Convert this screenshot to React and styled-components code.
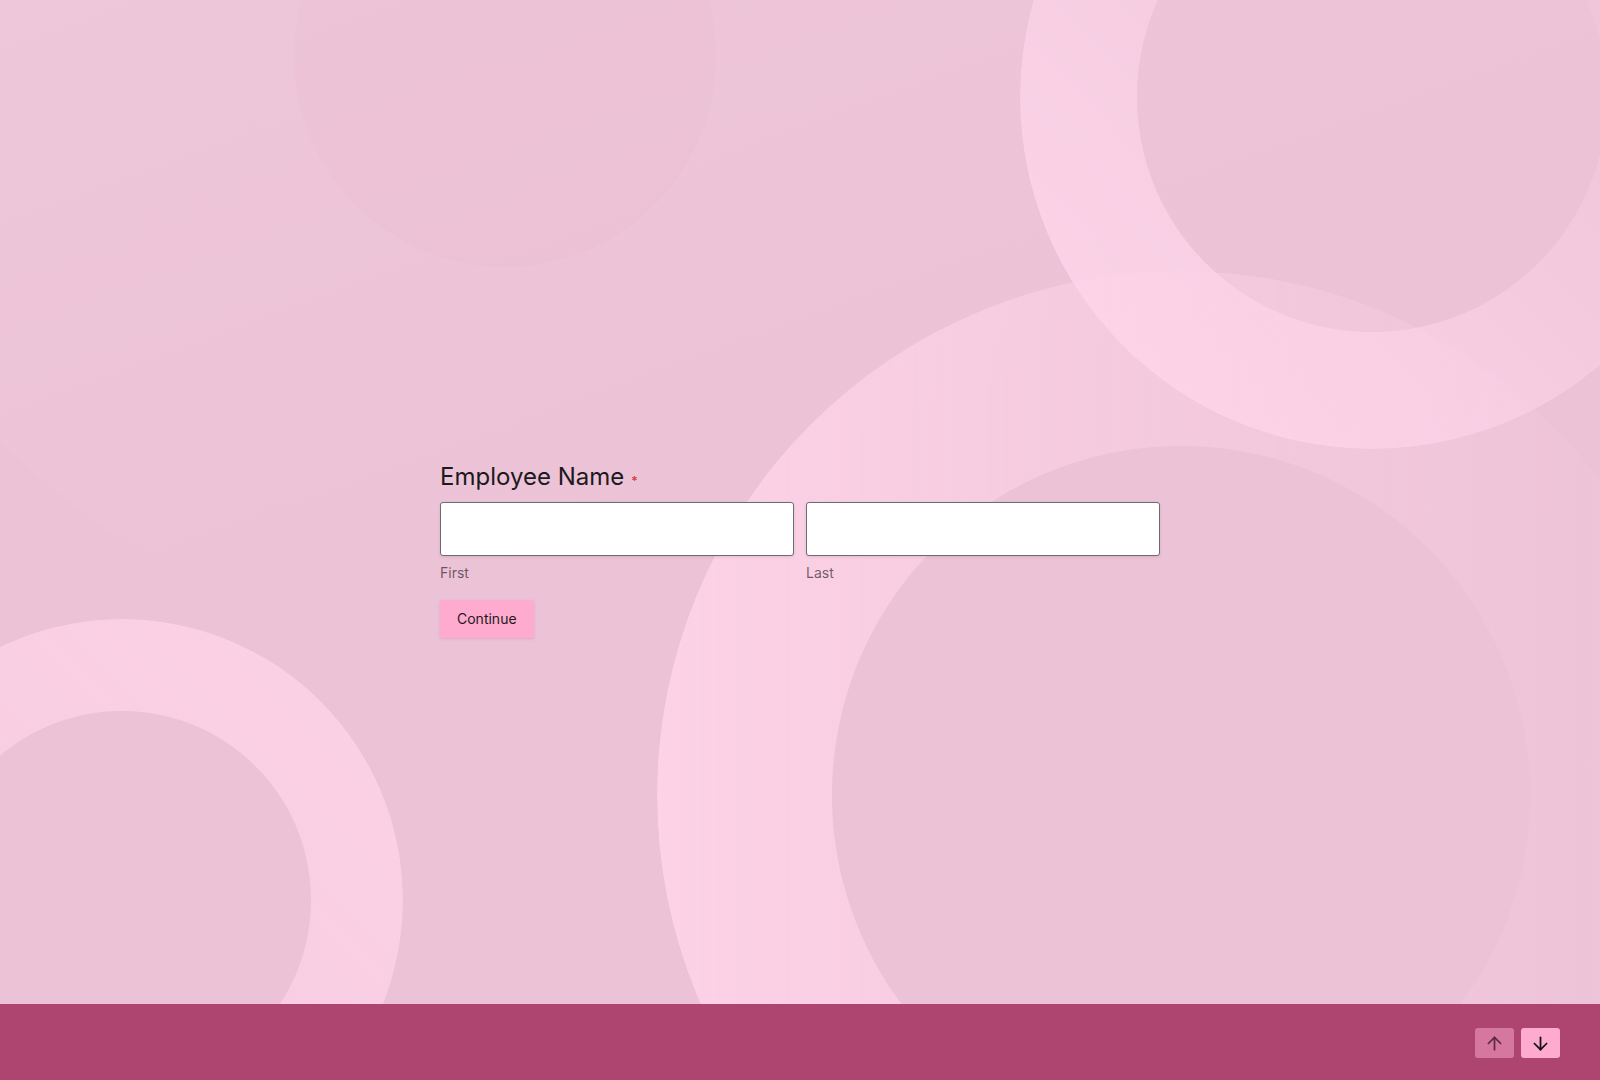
import styled, { createGlobalStyle } from "styled-components";
import { ArrowUp, ArrowDown } from "lucide-react";

const GlobalStyle = createGlobalStyle`
    * {
        box-sizing: border-box;
    }
    html, body {
        margin: 0;
        padding: 0;
        height: 100%;
    }
    body {
        font-family: Inter, "Noto Sans", "Liberation Sans", sans-serif;
        background: #ecc2d6;
        color: #1c1a1d;
    }
`;

// decorative shapes on the backdrop: x/y are centre coordinates
const shapes = [
    { x: 700, y: -300, r: 1020, hole: 0, bg: "linear-gradient(160deg, rgba(255,228,240,0.45) 0%, rgba(255,228,240,0.12) 55%, rgba(255,228,240,0) 80%)" },
    { x: 505, y: 56, r: 211, hole: 0, bg: "rgba(214,150,182,0.06)" },
    { x: 1372, y: 97, r: 352, hole: 235, bg: "linear-gradient(to top right, rgba(255,214,234,0.8) 15%, rgba(255,214,234,0.12) 75%)" },
    { x: 1181, y: 795, r: 524, hole: 349, bg: "linear-gradient(90deg, rgba(255,212,232,0.88) 0%, rgba(255,212,232,0.5) 40%, rgba(255,212,232,0.04) 100%)" },
    { x: 122, y: 900, r: 281, hole: 189, bg: "linear-gradient(to bottom left, rgba(255,212,232,0.85), rgba(255,212,232,0.45))" },
];

const Page = styled.div`
    min-height: 100vh;
    display: flex;
    flex-direction: column;
    overflow: hidden;
`;

const Stage = styled.main`
    position: relative;
    flex: 1;
    overflow: hidden;
`;

const Backdrop = styled.div`
    position: absolute;
    inset: 0;
    pointer-events: none;
`;

const Shape = styled.div`
    position: absolute;
    border-radius: 50%;
    width: ${({ $r }) => $r * 2}px;
    height: ${({ $r }) => $r * 2}px;
    left: ${({ $x, $r }) => $x - $r}px;
    top: ${({ $y, $r }) => $y - $r}px;
    background: ${({ $bg }) => $bg};
    ${({ $hole }) =>
        $hole
            ? `
        -webkit-mask: radial-gradient(circle closest-side, transparent ${$hole - 0.5}px, #000 ${$hole + 0.5}px);
        mask: radial-gradient(circle closest-side, transparent ${$hole - 0.5}px, #000 ${$hole + 0.5}px);
    `
            : ""}
`;

const Form = styled.form`
    position: relative;
    width: 720px;
    margin: 0 auto;
    padding-top: 461px;
    padding-bottom: 40px;
`;

const Title = styled.h2`
    margin: 0 0 5px;
    font-size: 24px;
    line-height: 32px;
    font-weight: 400;
    color: #1c1a1d;
    display: flex;
    align-items: baseline;
    gap: 7px;
`;

const Required = styled.span`
    font-size: 12px;
    color: #d63b3b;
    font-weight: 600;
`;

const Fields = styled.div`
    display: grid;
    grid-template-columns: 1fr 1fr;
    gap: 12px;
`;

const Field = styled.label`
    display: flex;
    flex-direction: column;
`;

const Input = styled.input`
    height: 54px;
    width: 100%;
    border: 1px solid #6c6b78;
    border-radius: 3px;
    background: #fff;
    box-shadow: 0 1px 3px rgba(80, 30, 50, 0.12);
    font: inherit;
    font-size: 16px;
    padding: 0 14px;
    outline: none;
`;

const Hint = styled.span`
    margin-top: 7px;
    font-size: 14px;
    line-height: 20px;
    color: rgba(40, 25, 32, 0.66);
`;

const Continue = styled.button`
    margin-top: 17px;
    height: 38px;
    padding: 0 17px;
    border: none;
    border-radius: 2px;
    background: #ffabd0;
    color: #1c1a1d;
    font-family: inherit;
    font-size: 14px;
    line-height: 20px;
    box-shadow: 0 1px 3px rgba(120, 40, 80, 0.15);
    cursor: pointer;
`;

const Footer = styled.footer`
    height: 76px;
    flex-shrink: 0;
    background: #ae4470;
    display: flex;
    justify-content: flex-end;
    align-items: center;
    gap: 7px;
    padding: 2px 40px 0 0;
    position: relative;
`;

const NavButton = styled.button`
    width: 39px;
    height: 30px;
    border: none;
    border-radius: 3px;
    background: #ffabd0;
    color: #111;
    display: flex;
    align-items: center;
    justify-content: center;
    padding: 0;
    opacity: ${({ disabled }) => (disabled ? 0.5 : 1)};
    cursor: ${({ disabled }) => (disabled ? "default" : "pointer")};
`;

const App = () => {
    return (
        <Page>
            <GlobalStyle />
            <Stage>
                <Backdrop>
                    {shapes.map((s, i) => (
                        <Shape key={i} $x={s.x} $y={s.y} $r={s.r} $hole={s.hole} $bg={s.bg} />
                    ))}
                </Backdrop>
                <Form onSubmit={(e) => e.preventDefault()}>
                    <Title>
                        Employee Name <Required>*</Required>
                    </Title>
                    <Fields>
                        <Field>
                            <Input type="text" />
                            <Hint>First</Hint>
                        </Field>
                        <Field>
                            <Input type="text" />
                            <Hint>Last</Hint>
                        </Field>
                    </Fields>
                    <Continue type="submit">Continue</Continue>
                </Form>
            </Stage>
            <Footer>
                <NavButton disabled aria-label="Previous">
                    <ArrowUp size={21} strokeWidth={2} />
                </NavButton>
                <NavButton aria-label="Next">
                    <ArrowDown size={21} strokeWidth={2} />
                </NavButton>
            </Footer>
        </Page>
    );
};

export default App;
